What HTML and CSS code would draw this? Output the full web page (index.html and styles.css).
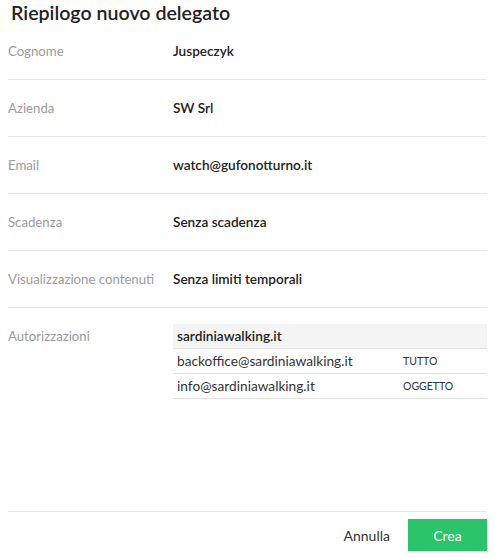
FILE: index.html
```html
<!DOCTYPE html>
<html lang="it">
<head>
<meta charset="utf-8">
<title>Riepilogo nuovo delegato</title>
<link rel="stylesheet" href="styles.css">
</head>
<body>
<div class="page">
  <h1 class="title">Riepilogo nuovo delegato</h1>
  <div class="rows">
    <div class="row"><div class="label">Cognome</div><div class="value">Juspeczyk</div></div>
    <div class="row"><div class="label">Azienda</div><div class="value">SW Srl</div></div>
    <div class="row"><div class="label">Email</div><div class="value">watch@gufonotturno.it</div></div>
    <div class="row"><div class="label">Scadenza</div><div class="value">Senza scadenza</div></div>
    <div class="row"><div class="label">Visualizzazione contenuti</div><div class="value">Senza limiti temporali</div></div>
    <div class="row last">
      <div class="label">Autorizzazioni</div>
      <div class="auth">
        <div class="auth-head">sardiniawalking.it</div>
        <div class="auth-row"><span class="mail">backoffice@sardiniawalking.it</span><span class="perm">TUTTO</span></div>
        <div class="auth-row"><span class="mail">info@sardiniawalking.it</span><span class="perm">OGGETTO</span></div>
      </div>
    </div>
  </div>
  <div class="footer">
    <button class="btn-link">Annulla</button>
    <button class="btn-primary">Crea</button>
  </div>
</div>
</body>
</html>
```
FILE: styles.css
```css
html, body {
  margin: 0;
  padding: 0;
  background: #fff;
}
body {
  font-family: Lato, "Open Sans", "Liberation Sans", sans-serif;
  color: #222;
}
.page {
  height: 558px;
  box-sizing: border-box;
  padding: 0 8px 7px 8px;
  display: flex;
  flex-direction: column;
}
.title {
  margin: 3px 0 0 3px;
  font-size: 19.6px;
  line-height: 20px;
  font-weight: 600;
  color: #222;
}
.rows {
  display: flex;
  flex-direction: column;
}
.row {
  display: grid;
  grid-template-columns: 165px 1fr;
  padding: 16px 0;
  border-bottom: 1px solid #e6e6e6;
  font-size: 13.2px;
  line-height: 24px;
}
.row.last {
  border-bottom: none;
}
.label {
  color: #9b9b9b;
}
.value {
  font-weight: 600;
  font-size: 13.6px;
  color: #222;
}
.auth {
  display: flex;
  flex-direction: column;
  font-size: 13.7px;
}
.auth-head {
  background: #f4f4f4;
  font-weight: 600;
  line-height: 24px;
  padding: 0 4px;
  border-bottom: 1px solid #e3e3e3;
  color: #222;
}
.auth-row {
  display: grid;
  grid-template-columns: 226px 1fr;
  line-height: 24px;
  padding-left: 4px;
  border-bottom: 1px solid #e3e3e3;
  color: #333;
}
.perm {
  font-size: 10.5px;
  color: #333;
}
.footer {
  margin-top: auto;
  border-top: 1px solid #e6e6e6;
  padding-top: 7px;
  display: flex;
  justify-content: flex-end;
  align-items: center;
  gap: 18px;
}
.btn-link {
  background: none;
  border: none;
  padding: 0;
  font-family: inherit;
  font-size: 14px;
  color: #333;
}
.btn-primary {
  width: 79px;
  height: 32px;
  border: none;
  background: #2bc46b;
  color: #fff;
  font-family: inherit;
  font-size: 14px;
  padding: 0;
}
```
